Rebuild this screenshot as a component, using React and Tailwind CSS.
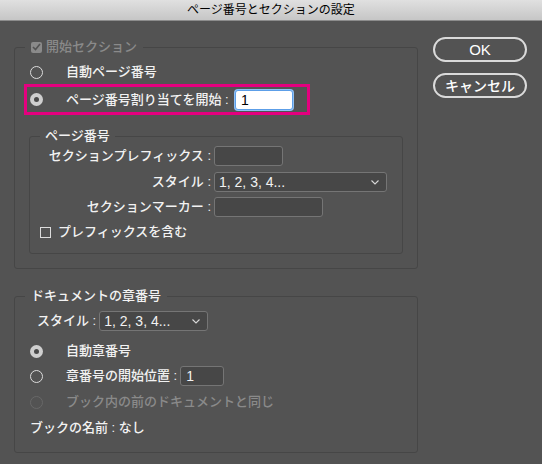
const ff = "font-['Liberation_Sans','Noto_Sans_CJK_JP',sans-serif]";

function Radio({ checked, disabled }) {
  if (checked) {
    return (
      <span className="flex h-[13px] w-[13px] shrink-0 items-center justify-center rounded-full bg-[#cfcfcf]">
        <span className="h-[5px] w-[5px] rounded-full bg-[#4a4a4a]" />
      </span>
    );
  }
  return (
    <span
      className={`h-[13px] w-[13px] shrink-0 rounded-full border ${
        disabled ? 'border-[#686868]' : 'border-[#dcdcdc]'
      }`}
    />
  );
}

function Field({ width, value, focused }) {
  return (
    <div
      className={`flex h-[20px] items-center rounded-[3px] px-[5px] text-[14px] font-normal ${width} ${
        focused
          ? 'border border-[#5c9ee8] bg-white text-black shadow-[0_0_0_1px_#8fc0f5]'
          : 'border border-[#757575] bg-[#474747] text-[#f2f2f2]'
      }`}
    >
      {value}
    </div>
  );
}

function Select({ width, value }) {
  return (
    <div
      className={`flex h-[20px] items-center justify-between rounded-[3px] border border-[#757575] bg-[#474747] pl-[4px] pr-[7px] text-[14px] text-[#f2f2f2] ${width}`}
    >
      <span>{value}</span>
      <svg width="8" height="5" viewBox="0 0 8 5" fill="none">
        <path d="M0.5 0.5 L4 4 L7.5 0.5" stroke="#d8d8d8" strokeWidth="1.1" />
      </svg>
    </div>
  );
}

export default function App() {
  return (
    <div className={`h-[464px] w-[542px] overflow-hidden bg-[#535353] font-medium leading-[20px] text-[#f2f2f2] ${ff}`}>
      <div className="flex h-[21px] items-center justify-center border-b border-[#8c8c8c] bg-gradient-to-b from-[#e0e0e0] to-[#c6c6c6] text-[12px] font-normal text-black">
        ページ番号とセクションの設定
      </div>

      <div className="flex items-start pt-[16px]">
        <div className="ml-[14px] w-[404px]">
          {/* 開始セクション */}
          <fieldset className="w-[404px] rounded-[3px] border border-[#464646] p-0">
            <legend className="ml-[10px] flex h-[20px] items-center px-[6px] text-[13px] text-[#8a8a8a]">
              <span className="mr-[4px] flex h-[11px] w-[11px] items-center justify-center rounded-[2px] bg-[#8a8a8a]">
                <svg width="9" height="8" viewBox="0 0 9 8" fill="none">
                  <path d="M1 4 L3.5 6.5 L8 1" stroke="#535353" strokeWidth="1.6" />
                </svg>
              </span>
              開始セクション
            </legend>
            <div className="pb-[14px] pl-[9px] pt-[5px]">
              <div className="ml-[6px] flex h-[20px] items-center text-[13px]">
                <Radio />
                <span className="ml-[23px]">自動ページ番号</span>
              </div>
              <div className="mt-[2px] flex h-[31px] w-[286px] items-center border-[3px] border-[#e4007f] pl-[3px] text-[13px]">
                <Radio checked />
                <span className="ml-[23px] w-[169px] whitespace-nowrap">ページ番号割り当てを開始 :</span>
                <Field width="w-[58px]" value="1" focused />
              </div>

              <fieldset className="ml-[5px] mt-[11px] w-[374px] rounded-[3px] border border-[#464646] p-0">
                <legend className="ml-[10px] px-[5px] text-[13px] leading-[20px]">ページ番号</legend>
                <div className="pb-[11px] text-[13px]">
                  <div className="flex h-[20px] items-center">
                    <span className="w-[181px] text-right">セクションプレフィックス :</span>
                    <div className="ml-[3px]">
                      <Field width="w-[69px]" value="" />
                    </div>
                  </div>
                  <div className="mt-[6px] flex h-[20px] items-center">
                    <span className="w-[181px] text-right">スタイル :</span>
                    <div className="ml-[3px]">
                      <Select width="w-[173px]" value="1, 2, 3, 4..." />
                    </div>
                  </div>
                  <div className="mt-[5px] flex h-[20px] items-center">
                    <span className="w-[181px] text-right">セクションマーカー :</span>
                    <div className="ml-[3px]">
                      <Field width="w-[109px]" value="" />
                    </div>
                  </div>
                  <div className="mt-[5px] flex h-[20px] items-center pl-[10px]">
                    <span className="h-[11px] w-[11px] border border-[#dcdcdc]" />
                    <span className="ml-[7px]">プレフィックスを含む</span>
                  </div>
                </div>
              </fieldset>
            </div>
          </fieldset>

          {/* ドキュメントの章番号 */}
          <fieldset className="mt-[17px] w-[404px] rounded-[3px] border border-[#464646] p-0">
            <legend className="ml-[10px] px-[6px] text-[13px] leading-[20px]">ドキュメントの章番号</legend>
            <div className="pb-[14px] pl-[15px] pt-[5px] text-[13px]">
              <div className="ml-[7px] flex h-[20px] items-center">
                <span>スタイル :</span>
                <div className="ml-[3px]">
                  <Select width="w-[109px]" value="1, 2, 3, 4..." />
                </div>
              </div>
              <div className="mt-[10px] flex h-[20px] items-center">
                <Radio checked />
                <span className="ml-[23px]">自動章番号</span>
              </div>
              <div className="mt-[5px] flex h-[20px] items-center">
                <Radio />
                <span className="ml-[23px]">章番号の開始位置 :</span>
                <div className="ml-[3px]">
                  <Field width="w-[44px]" value="1" />
                </div>
              </div>
              <div className="mt-[6px] flex h-[20px] items-center text-[#8a8a8a]">
                <Radio disabled />
                <span className="ml-[23px]">ブック内の前のドキュメントと同じ</span>
              </div>
              <div className="mt-[6px] flex h-[20px] items-center">ブックの名前 : なし</div>
            </div>
          </fieldset>
        </div>

        <div className="ml-[15px] flex flex-col gap-[11px]">
          <button
            type="button"
            className="flex h-[25px] w-[94px] items-center justify-center rounded-full border-2 border-[#dadada] text-[15px] font-normal text-white"
          >
            OK
          </button>
          <button
            type="button"
            className="flex h-[25px] w-[94px] items-center justify-center rounded-full border-2 border-[#dadada] text-[14px] text-white"
          >
            キャンセル
          </button>
        </div>
      </div>
    </div>
  );
}
